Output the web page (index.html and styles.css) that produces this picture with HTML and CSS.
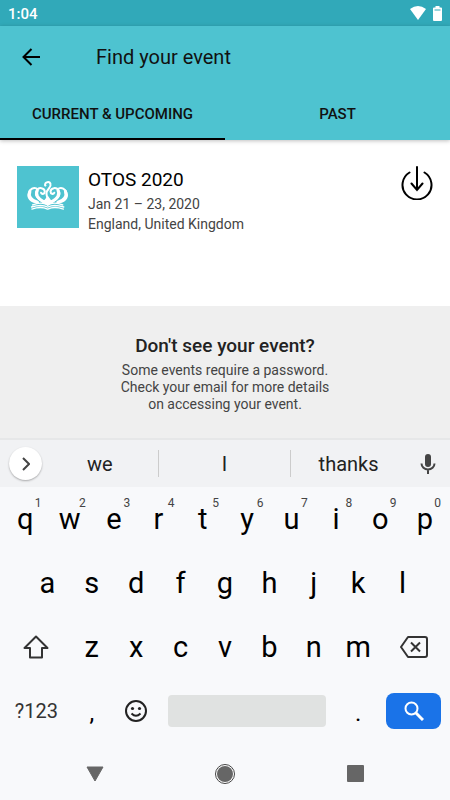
FILE: index.html
```html
<!DOCTYPE html>
<html lang="en">

<head>
  <meta charset="UTF-8">
  <meta name="viewport" content="width=device-width, initial-scale=1">
  <title>Find your event</title>
  <link rel="stylesheet" href="styles.css">
</head>

<body>

  <div class="status-bar">
    <span>1:04</span>
    <div class="status-icons">
      <svg width="16" height="14" viewBox="0 0 16 14"><path d="M0 3Q8-3 16 3L8 14Z" fill="#fff"/></svg>
      <svg width="9" height="15" viewBox="0 0 9 15"><path d="M2.500 0h4v1.500H8a1 1 0 0 1 1 1V14a1 1 0 0 1-1 1H1a1 1 0 0 1-1-1V2.500a1 1 0 0 1 1-1h1.500z" fill="#fff"/><path d="M1.500 4h6" stroke="#31a9b9"/></svg>
    </div>
  </div>

  <header class="header">
    <div class="toolbar">
      <button class="icon-button" aria-label="Back">
        <svg width="18" height="18" viewBox="0 0 18 18" fill="none" stroke="#000" stroke-width="2"><path d="M18 9H1.500M9.500 1L1.500 9l8 8"/></svg>
      </button>
      <h1>Find your event</h1>
    </div>
    <nav class="tabs">
      <button class="tab active">CURRENT &amp; UPCOMING</button>
      <button class="tab">PAST</button>
    </nav>
  </header>

  <main class="events">
    <div class="event">
      <svg class="event-logo" viewBox="24 19 183 183">
        <g fill="none" stroke="#fff" stroke-linecap="round">
          <path d="M86 126C64 126 54 112 59 98C63 86 73 82 81 85M143 126C165 126 175 112 170 98C166 86 156 82 148 85" stroke-width="6"/>
          <path d="M62 94C57 108 65 121 83 125M167 94C172 108 164 121 146 125" stroke-width="9"/>
          <path d="M110 128C86 120 75 105 82 92C88 80 105 83 106 94C106 101 98 104 95 98M119 128C143 120 154 105 147 92C141 80 124 83 123 94C123 101 131 104 134 98" stroke-width="6"/>
          <path d="M84 91C77 103 86 116 103 125M145 91C152 103 143 116 126 125" stroke-width="9"/>
          <path d="M107 76C105 65 121 63 123 73C126 83 111 87 111 100C111 110 117 116 115 128" stroke-width="6"/>
          <circle cx="108" cy="77" r="2" fill="#fff"/>
          <path d="M114 134C101 126 82 129 70 134M115 134C128 126 147 129 159 134M114 140C100 133 80 136 67 140M115 140C129 133 149 136 162 140M114 146C101 140 80 142 68 146M115 146C128 140 149 142 161 146" stroke-width="4"/>
        </g>
        <path d="M94 119L115 137L136 119L124 119L115 107L105 119Z" fill="#fff"/>
      </svg>
      <div class="event-text">
        <h2>OTOS 2020</h2>
        <p>Jan 21 – 23, 2020</p>
        <p>England, United Kingdom</p>
      </div>
      <button class="icon-button" aria-label="Download OTOS 2020">
        <svg width="32" height="34" viewBox="0 0 32 34" fill="none" stroke="#000" stroke-width="2" stroke-linecap="round"><path d="M8.500 6.500a14.500 14.500 0 1 0 15 0M16 1v23M10.500 17.500L16 24l5.500-6.500"/></svg>
      </button>
    </div>
  </main>

  <section class="hint">
    <h2>Don't see your event?</h2>
    <p>Some events require a password.<br>Check your email for more details<br>on accessing your event.</p>
  </section>

  <div class="keyboard">
    <div class="suggestions">
      <button class="expand" aria-label="More">
        <svg width="8" height="14" viewBox="0 0 8 14" fill="none" stroke="#444" stroke-width="2"><path d="M1 1l6 6-6 6"/></svg>
      </button>
      <div class="words">
        <button>we</button>
        <button>I</button>
        <button>thanks</button>
      </div>
      <button class="mic" aria-label="Voice input">
        <svg width="16" height="20" viewBox="0 0 16 20" fill="none" stroke="#444" stroke-width="2"><rect x="5" y="0" width="6" height="13" rx="3" fill="#444" stroke="none"/><path d="M1.500 9.500a6.500 6 0 0 0 13 0M8 15.500V20"/></svg>
      </button>
    </div>

    <div class="keys">
      <button class="key">q<sup>1</sup></button>
      <button class="key">w<sup>2</sup></button>
      <button class="key">e<sup>3</sup></button>
      <button class="key">r<sup>4</sup></button>
      <button class="key">t<sup>5</sup></button>
      <button class="key">y<sup>6</sup></button>
      <button class="key">u<sup>7</sup></button>
      <button class="key">i<sup>8</sup></button>
      <button class="key">o<sup>9</sup></button>
      <button class="key">p<sup>0</sup></button>

      <button class="key indent">a</button>
      <button class="key">s</button>
      <button class="key">d</button>
      <button class="key">f</button>
      <button class="key">g</button>
      <button class="key">h</button>
      <button class="key">j</button>
      <button class="key">k</button>
      <button class="key">l</button>

      <button class="key wide row-start" aria-label="Shift">
        <svg width="26" height="24" viewBox="0 0 26 24" fill="none" stroke="#333" stroke-width="2" stroke-linejoin="round"><path d="M13 1.500L24.500 13H19v9.500H7V13H1.500z"/></svg>
      </button>
      <button class="key">z</button>
      <button class="key">x</button>
      <button class="key">c</button>
      <button class="key">v</button>
      <button class="key">b</button>
      <button class="key">n</button>
      <button class="key">m</button>
      <button class="key wide" aria-label="Delete">
        <svg width="28" height="22" viewBox="0 0 28 22" fill="none" stroke="#333" stroke-width="2" stroke-linejoin="round"><path d="M8 1h17a2 2 0 0 1 2 2v16a2 2 0 0 1-2 2H8L1 11zM11 6.500l9 9M20 6.500l-9 9"/></svg>
      </button>

      <button class="key wide symbols">?123</button>
      <button class="key punct">,</button>
      <button class="key" aria-label="Emoji">
        <svg width="22" height="22" viewBox="0 0 22 22" fill="none" stroke="#222" stroke-width="2"><circle cx="11" cy="11" r="10"/><path d="M6.500 13.500q4.500 4.500 9 0"/><g fill="#222" stroke="none"><circle cx="7.500" cy="8.500" r="1.600"/><circle cx="14.500" cy="8.500" r="1.600"/></g></svg>
      </button>
      <button class="key space" aria-label="Space"></button>
      <button class="key punct">.</button>
      <button class="key wide search" aria-label="Search">
        <svg width="20" height="20" viewBox="0 0 20 20" fill="none" stroke="#fff" stroke-width="2"><circle cx="7.500" cy="7.500" r="6"/><path d="M12 12l7 7" stroke-width="3"/></svg>
      </button>
    </div>
  </div>

  <nav class="system-nav">
    <button aria-label="Back"><svg width="18" height="16" viewBox="0 0 18 16"><path d="M1 1h16L9 15z" fill="#666" stroke="#666" stroke-linejoin="round"/></svg></button>
    <button aria-label="Home"><svg width="20" height="20" viewBox="0 0 20 20"><circle cx="10" cy="10" r="9.500" fill="#fff" stroke="#444"/><circle cx="10" cy="10" r="8" fill="#666"/></svg></button>
    <button aria-label="Overview"><svg width="17" height="17" viewBox="0 0 17 17"><rect width="17" height="17" rx="1" fill="#666"/></svg></button>
  </nav>

</body>

</html>
```

FILE: styles.css
```css
body {
  display: flex;
  flex-direction: column;
  min-height: 100vh;
  margin: 0;
  font-family: Roboto, sans-serif;
  color: #111;
  background: #fff;
}

h1,
h2,
p {
  margin: 0;
}

button {
  display: flex;
  align-items: center;
  justify-content: center;
  padding: 0;
  border: none;
  background: none;
  font-family: inherit;
  color: inherit;
  cursor: pointer;
}

svg {
  display: block;
}

.status-bar {
  display: flex;
  align-items: center;
  justify-content: space-between;
  height: 26px;
  padding: 0 8px;
  background: #31a9b9;
  color: #fff;
  font-size: 15px;
  font-weight: 500;
}

.status-bar span {
  padding-top: 2px;
}

.status-icons {
  display: flex;
  align-items: center;
  gap: 7px;
}

.header {
  background: #4ec3d0;
  box-shadow: 0 1px 4px rgba(0, 0, 0, 0.25);
}

.toolbar {
  display: flex;
  align-items: center;
  gap: 56px;
  height: 62px;
  padding: 0 22px;
}

.toolbar h1 {
  font-size: 20px;
  font-weight: 400;
}

.tabs {
  display: flex;
  height: 52px;
}

.tab {
  flex: 1;
  border-top: 2px solid transparent;
  border-bottom: 2px solid transparent;
  font-size: 15px;
  font-weight: 500;
}

.tab.active {
  border-bottom-color: #000;
}

.events {
  flex: 1;
}

.event {
  display: flex;
  align-items: flex-start;
  gap: 9px;
  padding: 26px 17px;
}

.event-logo {
  width: 62px;
  height: 62px;
  background: #4ec3d0;
}

.event-text {
  flex: 1;
  font-size: 14px;
  line-height: 20px;
  color: #444;
}

.event-text h2 {
  font-size: 19px;
  font-weight: 400;
  line-height: 28px;
  color: #000;
}

.hint {
  padding: 28px 16px 25px;
  background: #efefef;
  text-align: center;
  font-size: 14px;
  line-height: 17px;
  color: #444;
}

.hint h2 {
  margin-bottom: 4px;
  font-size: 19px;
  font-weight: 500;
  line-height: 24px;
  color: #222;
}

.keyboard {
  background: #f8f9fb;
}

.suggestions {
  display: flex;
  align-items: center;
  height: 47px;
  padding: 0 14px 0 9px;
  border-top: 2px solid #e6e7e8;
  background: #f1f2f4;
}

.expand {
  width: 33px;
  height: 33px;
  border-radius: 50%;
  background: #fff;
  box-shadow: 0 1px 2px rgba(0, 0, 0, 0.3);
}

.words {
  display: grid;
  flex: 1;
  grid-template-columns: 7fr 8fr 7fr;
  margin-right: 14px;
}

.words button {
  height: 27px;
  font-size: 20px;
  color: #222;
}

.words button + button {
  border-left: 1px solid #ccc;
}

.keys {
  display: grid;
  grid-template-columns: repeat(20, 1fr);
  grid-auto-rows: 64px;
  padding: 0 3px;
}

.key {
  position: relative;
  grid-column: span 2;
  font-size: 29px;
  color: #000;
}

.key sup {
  position: absolute;
  top: 9px;
  right: 6px;
  font-size: 12px;
  line-height: 14px;
  color: #444;
}

.key.indent {
  grid-column: 2 / span 2;
}

.key.wide {
  grid-column: span 3;
}

.key.row-start {
  grid-column: 1 / span 3;
}

.key.symbols {
  font-size: 20px;
  color: #333;
}

.key.punct {
  padding-top: 4px;
  font-size: 24px;
}

.key.space {
  grid-column: span 8;
  margin: 16px 10px;
  border-radius: 4px;
  background: #e0e2e1;
}

.key.search {
  margin: 14px 6px;
  border-radius: 8px;
  background: #1a73e8;
}

.system-nav {
  display: flex;
  justify-content: space-around;
  height: 57px;
  padding: 4px 30px 0;
  box-sizing: border-box;
  background: #f8f9fb;
}
```
